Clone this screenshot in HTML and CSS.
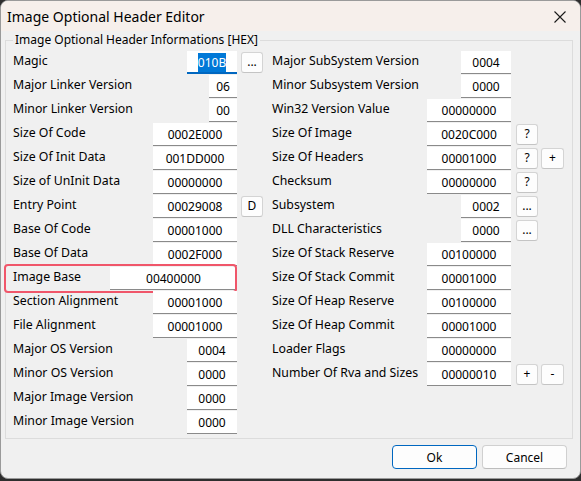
FILE: index.html
```html
<!DOCTYPE html>
<html>
<head>
<meta charset="utf-8">
<link rel="stylesheet" href="styles.css">
</head>
<body>
<div class="window">
  <div class="titlebar">
    <span class="title">Image Optional Header Editor</span>
    <span class="close"><svg width="12" height="12" viewBox="0 0 12 12"><path d="M0.5 0.5L11.5 11.5M11.5 0.5L0.5 11.5" stroke="#1a1a1a" stroke-width="1.1" fill="none"/></svg></span>
  </div>
  <div class="client">
    <fieldset class="group">
      <legend>Image Optional Header Informations [HEX]</legend>
      <div class="cols">
        <div class="col left">
          <div class="row"><span class="lbl">Magic</span><span class="inp w50 focus"><span class="sel">010B</span></span><span class="slot"><span class="btn">...</span></span></div>
          <div class="row"><span class="lbl">Major Linker Version</span><span class="inp w28">06</span><span class="slot"></span></div>
          <div class="row"><span class="lbl">Minor Linker Version</span><span class="inp w28">00</span><span class="slot"></span></div>
          <div class="row"><span class="lbl">Size Of Code</span><span class="inp w84">0002E000</span><span class="slot"></span></div>
          <div class="row"><span class="lbl">Size Of Init Data</span><span class="inp w84">001DD000</span><span class="slot"></span></div>
          <div class="row"><span class="lbl">Size of UnInit Data</span><span class="inp w84">00000000</span><span class="slot"></span></div>
          <div class="row"><span class="lbl">Entry Point</span><span class="inp w84">00029008</span><span class="slot"><span class="btn">D</span></span></div>
          <div class="row"><span class="lbl">Base Of Code</span><span class="inp w84">00001000</span><span class="slot"></span></div>
          <div class="row"><span class="lbl">Base Of Data</span><span class="inp w84">0002F000</span><span class="slot"></span></div>
          <div class="row hl"><span class="lbl">Image Base</span><span class="inp w127">00400000</span><span class="slot"></span><span class="mark"></span></div>
          <div class="row"><span class="lbl">Section Alignment</span><span class="inp w84">00001000</span><span class="slot"></span></div>
          <div class="row"><span class="lbl">File Alignment</span><span class="inp w84">00001000</span><span class="slot"></span></div>
          <div class="row"><span class="lbl">Major OS Version</span><span class="inp w50">0004</span><span class="slot"></span></div>
          <div class="row"><span class="lbl">Minor OS Version</span><span class="inp w50">0000</span><span class="slot"></span></div>
          <div class="row"><span class="lbl">Major Image Version</span><span class="inp w50">0000</span><span class="slot"></span></div>
          <div class="row"><span class="lbl">Minor Image Version</span><span class="inp w50">0000</span><span class="slot"></span></div>
        </div>
        <div class="col right">
          <div class="row"><span class="lbl">Major SubSystem Version</span><span class="inp w50">0004</span><span class="slot2"></span></div>
          <div class="row"><span class="lbl">Minor Subsystem Version</span><span class="inp w50">0000</span><span class="slot2"></span></div>
          <div class="row"><span class="lbl">Win32 Version Value</span><span class="inp w84">00000000</span><span class="slot2"></span></div>
          <div class="row"><span class="lbl">Size Of Image</span><span class="inp w84">0020C000</span><span class="slot2"><span class="btn">?</span></span></div>
          <div class="row"><span class="lbl">Size Of Headers</span><span class="inp w84">00001000</span><span class="slot2"><span class="btn">?</span><span class="btn b23">+</span></span></div>
          <div class="row"><span class="lbl">Checksum</span><span class="inp w84">00000000</span><span class="slot2"><span class="btn">?</span></span></div>
          <div class="row"><span class="lbl">Subsystem</span><span class="inp w50">0002</span><span class="slot2"><span class="btn">...</span></span></div>
          <div class="row"><span class="lbl">DLL Characteristics</span><span class="inp w50">0000</span><span class="slot2"><span class="btn">...</span></span></div>
          <div class="row"><span class="lbl">Size Of Stack Reserve</span><span class="inp w84">00100000</span><span class="slot2"></span></div>
          <div class="row"><span class="lbl">Size Of Stack Commit</span><span class="inp w84">00001000</span><span class="slot2"></span></div>
          <div class="row"><span class="lbl">Size Of Heap Reserve</span><span class="inp w84">00100000</span><span class="slot2"></span></div>
          <div class="row"><span class="lbl">Size Of Heap Commit</span><span class="inp w84">00001000</span><span class="slot2"></span></div>
          <div class="row"><span class="lbl">Loader Flags</span><span class="inp w84">00000000</span><span class="slot2"></span></div>
          <div class="row"><span class="lbl">Number Of Rva and Sizes</span><span class="inp w84">00000010</span><span class="slot2"><span class="btn">+</span><span class="btn b23">-</span></span></div>
        </div>
      </div>
    </fieldset>
    <div class="actions">
      <span class="pbtn default">Ok</span>
      <span class="pbtn">Cancel</span>
    </div>
  </div>
</div>
</body>
</html>
```

FILE: styles.css
```css
html, body {
  margin: 0;
  padding: 0;
}
body {
  width: 581px;
  height: 481px;
  background: #2e2e2e;
  font-family: "Noto Sans", "Open Sans", sans-serif;
  font-size: 12px;
  color: #000;
  overflow: hidden;
}
.window {
  box-sizing: border-box;
  width: 581px;
  height: 479px;
  border: 1px solid #9a9a9a;
  border-radius: 8px;
  background: #f0f0f0;
  overflow: hidden;
  display: flex;
  flex-direction: column;
}
.titlebar {
  height: 30px;
  background: #f6efeb;
  display: flex;
  align-items: center;
  justify-content: space-between;
  padding: 0 14px 0 6px;
}
.title {
  font-size: 14px;
  line-height: 20px;
  margin-top: 1px;
}
.close {
  display: flex;
  width: 12px;
  height: 12px;
  margin-top: 1px;
}
.client {
  flex: 1;
  display: flex;
  flex-direction: column;
}
.group {
  margin: 1px 0 0 4px;
  width: 568px;
  box-sizing: border-box;
  border: 1px solid #dcdcdc;
  padding: 2px 7px 4px 7px;
}
.group legend {
  padding: 0 2px;
  margin-left: 0;
  line-height: 16px;
  font-size: 12px;
}
.cols {
  display: flex;
  gap: 9px;
}
.col {
  display: flex;
  flex-direction: column;
}
.left { width: 250px; }
.right { width: 292px; }
.row {
  height: 24px;
  display: flex;
  align-items: center;
  position: relative;
}
.lbl {
  flex: 1;
  white-space: nowrap;
  line-height: 16px;
  margin-top: -2px;
  font-size: 12.3px;
}
.inp {
  box-sizing: border-box;
  height: 23px;
  background: #fff;
  border-bottom: 1px solid #8a8a8a;
  text-align: center;
  line-height: 22px;
  padding-top: 1px;
}
.inp.focus {
  border-bottom: 2px solid #0067c0;
  line-height: 21px;
}
.sel {
  background: #0078d7;
  color: #fff;
  padding: 1px 0;
}
.w28 { width: 28px; }
.w50 { width: 50px; }
.w84 { width: 84px; }
.w127 { width: 127px; }
.slot {
  width: 26px;
  display: flex;
  justify-content: flex-end;
}
.slot2 {
  width: 53px;
  display: flex;
  gap: 3px;
  padding-left: 5px;
  box-sizing: border-box;
}
.btn {
  box-sizing: border-box;
  width: 22px;
  height: 21px;
  background: #fdfdfd;
  border: 1px solid #d4d4d4;
  border-bottom-color: #c4c4c4;
  border-radius: 3px;
  display: flex;
  align-items: center;
  justify-content: center;
  line-height: 1;
  font-size: 12px;
}
.btn.b23 { width: 23px; }
.mark {
  position: absolute;
  left: -9px;
  top: -2px;
  width: 233px;
  height: 29px;
  box-sizing: border-box;
  border: 2px solid #f0566a;
  border-radius: 4px;
  pointer-events: none;
}
.actions {
  display: flex;
  justify-content: flex-end;
  gap: 5px;
  padding: 6px 13px 0 0;
}
.pbtn {
  box-sizing: border-box;
  width: 85px;
  height: 24px;
  background: #fdfdfd;
  border: 1px solid #d0d0d0;
  border-bottom-color: #bdbdbd;
  border-radius: 4px;
  display: flex;
  align-items: center;
  justify-content: center;
  font-size: 12px;
}
.pbtn.default {
  border: 1px solid #0067c0;
}
```
